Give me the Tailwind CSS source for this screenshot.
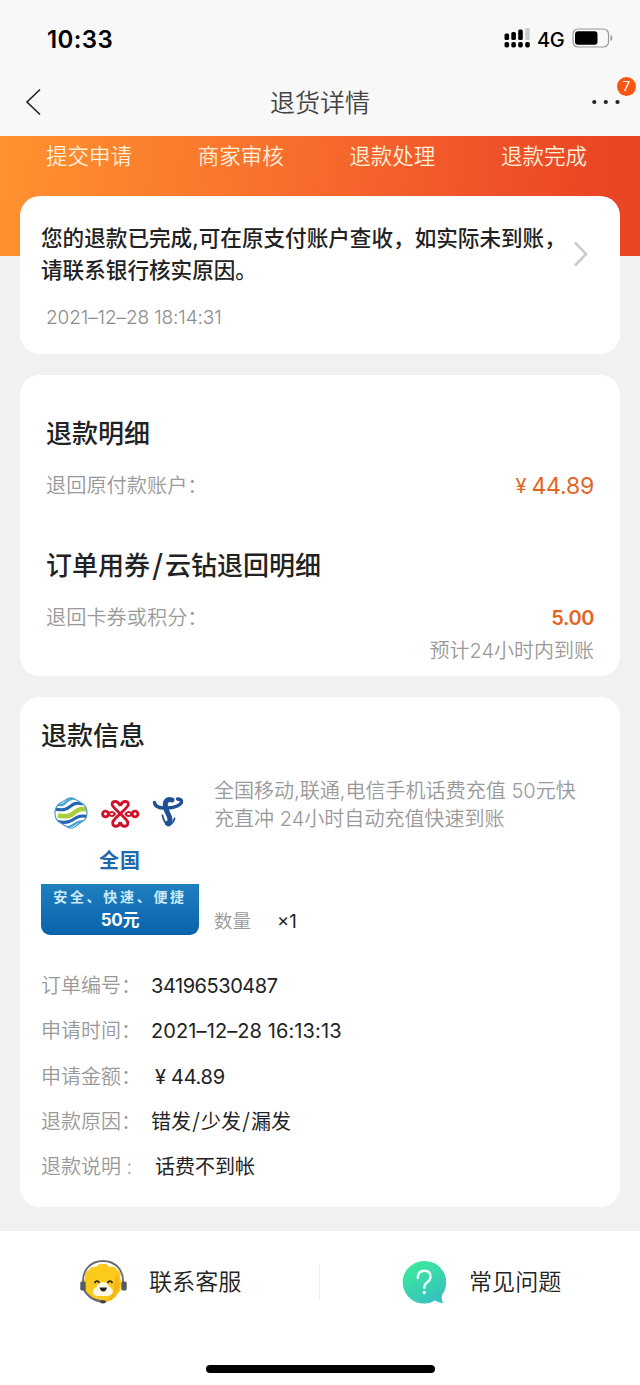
<!DOCTYPE html>
<html lang="zh-CN">
<head>
<meta charset="utf-8">
<meta name="viewport" content="width=device-width, initial-scale=1">
<title>退货详情</title>
<script src="https://cdn.jsdelivr.net/npm/@tailwindcss/browser@4"></script>
</head>
<body class="w-[640px] h-[1385px] overflow-hidden bg-[#f1f1f1] font-['Inter','Noto_Sans_CJK_SC',sans-serif] text-[#222] flex flex-col whitespace-nowrap">

<header class="h-[136px] shrink-0 bg-[#f8f8f8] flex flex-col">
  <div class="h-[76px] pl-[47px] pr-[26px] flex items-center justify-between">
    <span class="mt-[3px] text-[24px] leading-[30px] font-semibold text-black tracking-[0.4px]">10:33</span>
    <div class="flex items-center">
      <svg class="w-[27px] h-[21px]" viewBox="0 0 27 21">
        <g fill="#000"><rect x="0.5" y="5.500" width="4.600" height="6.500" rx="1.500"/><rect x="7.300" y="4" width="4.600" height="8" rx="1.500"/><rect x="14.200" y="1.500" width="4.600" height="10.500" rx="1.500"/><rect x="0.5" y="14" width="4.600" height="5.500" rx="1.800"/><rect x="7.300" y="14" width="4.600" height="5.500" rx="1.800"/><rect x="14.200" y="14" width="4.600" height="5.500" rx="1.800"/><rect x="21.200" y="14" width="4.600" height="5.500" rx="1.800"/></g>
        <rect x="21.200" y="0" width="4.600" height="12" rx="1.500" fill="#ccc"/>
      </svg>
      <span class="ml-[6px] mt-[3px] w-[28px] text-[20px] leading-[24px] font-medium text-black tracking-[-0.3px]">4G</span>
      <svg class="ml-[7px] w-[42px] h-[20px]" viewBox="0 0 42 20">
        <rect x="1" y="1" width="35.500" height="18" rx="5" fill="none" stroke="#999" stroke-width="1.200"/>
        <rect x="3" y="3.200" width="22.500" height="13.600" rx="3" fill="#000"/>
        <path d="M38.500 7v6c2.500-1 2.500-5 0-6z" fill="#999"/>
      </svg>
    </div>
  </div>
  <div class="h-[52px] px-[18px] grid grid-cols-[1fr_auto_1fr] items-center">
    <svg class="ml-[6px] w-[18px] h-[28px]" viewBox="0 0 18 28" fill="none" stroke="#222" stroke-width="1.600"><path d="M16 1.500 3 14l13 12.500"/></svg>
    <h1 class="mt-[2px] text-[25px] leading-[36px] font-[350] text-[#444]">退货详情</h1>
    <div class="justify-self-end relative w-[30px] h-[28px]">
      <svg class="w-[30px] h-[28px]" viewBox="0 0 30 28" fill="#222"><circle cx="2.300" cy="14" r="2.100"/><circle cx="13.800" cy="14" r="2.100"/><circle cx="25.500" cy="14" r="2.100"/></svg>
      <span class="absolute left-[25px] top-[-11px] w-[19px] h-[19px] rounded-full bg-[#f95611] text-white text-[13px] leading-[19px] text-center">7</span>
    </div>
  </div>
</header>

<main class="flex-1 px-[20px] flex flex-col bg-no-repeat bg-[length:100%_120px] bg-[linear-gradient(97deg,#ff922f_0%,#f9722c_40%,#f1572a_70%,#ea4524_94%)]">
  <div class="h-[60px] pt-[5px] pl-[26px] pr-[33px] flex justify-between text-[21.500px] leading-[30px] text-[#fff0dc] font-[350]">
    <span>提交申请</span><span>商家审核</span><span>退款处理</span><span>退款完成</span>
  </div>

  <section class="h-[158px] shrink-0 rounded-[20px] bg-white pl-[21px] pr-[31px] pt-[26px] flex justify-between">
    <div class="flex flex-col">
      <p class="text-[21.600px] leading-[32px] font-medium">您的退款已完成,可在原支付账户查收，如实际未到账，<br>请联系银行核实原因。</p>
      <time class="mt-[19px] ml-[5px] text-[19px] leading-[26px] font-light text-[#8c8c8c] tracking-[-0.1px]">2021–12–28 18:14:31</time>
    </div>
    <svg class="mt-[18px] -ml-[20px] w-[16px] h-[28px] shrink-0" viewBox="0 0 16 28" fill="none" stroke="#ccc" stroke-width="2.600"><path d="M2 2.500l11 11.500L2 25.500"/></svg>
  </section>

  <section class="mt-[21px] h-[301px] shrink-0 rounded-[20px] bg-white px-[26px] pt-[41px]">
    <h2 class="text-[26px] leading-[36px] font-medium">退款明细</h2>
    <div class="mt-[18px] h-[32px] flex justify-between items-center leading-[32px]">
      <span class="text-[20.200px] font-[350] text-[#999]">退回原付款账户：</span>
      <span class="text-[#e4651f] flex items-center"><span class="text-[20px] w-[16px]">¥</span><span class="text-[23px] tracking-[-0.2px]">44.89</span></span>
    </div>
    <h2 class="mt-[46px] h-[36px] text-[26px] leading-[36px] font-medium flex"><span>订单用券</span><span class="w-[15px] text-center text-[31px] font-normal">/</span><span>云钻退回明细</span></h2>
    <div class="mt-[18px] h-[32px] flex justify-between items-center leading-[32px]">
      <span class="text-[20.200px] font-[350] text-[#999]">退回卡券或积分：</span>
      <span class="text-[#e4651f] text-[20px] font-semibold tracking-[-0.4px]">5.00</span>
    </div>
    <p class="mt-[1px] text-right text-[20px] leading-[32px] font-[350] text-[#999]">预计24小时内到账</p>
  </section>

  <section class="mt-[21px] h-[510px] shrink-0 rounded-[20px] bg-white px-[21px] pt-[21px]">
    <h2 class="text-[26px] leading-[36px] font-medium">退款信息</h2>
    <div class="mt-[23px] flex gap-[16px] h-[158px]">
      <div class="w-[158px] rounded-[9px] overflow-hidden flex flex-col items-center">
        <svg class="w-[158px] h-[60px] shrink-0" viewBox="0 0 158 60" fill="none">
          <clipPath id="mobile"><path d="M27 21.500Q30 20 33 21.500L42 27Q46 30 46 36T42 44L33 50.500Q30 52 27 50.500L18 45Q14 42 14 36T18 27Z"/></clipPath>
          <g clip-path="url(#mobile)">
            <path d="M14 27.500c14 3 9-7 20-6" stroke="#4aa5cf" stroke-width="2.400"/>
            <path d="M14 32c18 4 13-9 28-5" stroke="#2466b0" stroke-width="3.200"/>
            <path d="M17 38.500c19 4 14-9 29-6" stroke="#a8cf38" stroke-width="4.600"/>
            <path d="M16 44.500c19 4 15-8 30-5" stroke="#2466b0" stroke-width="3.200"/>
            <path d="M20 49.500c15 3 12-7 24-5" stroke="#4aa5cf" stroke-width="2.400"/>
          </g>
          <path d="M27 21.500Q30 20 33 21.500L42 27Q46 30 46 36T42 44L33 50.500Q30 52 27 50.500L18 45Q14 42 14 36T18 27Z" stroke="#4a9cc4" stroke-width="1.200"/>
          <g stroke="#cf1129" stroke-width="2.900">
            <path d="M79.200 29C77 22.500 69.500 23.500 71.500 28.500 73 32 84.500 40.500 86.500 44.500 88.500 50 81 51.500 79.200 45"/>
            <path d="M79.200 29C81.400 22.500 89 23.500 87 28.500 85.500 32 74 40.500 72 44.500 70 50 77.400 51.500 79.200 45"/>
            <circle cx="64.500" cy="37" r="2.900"/><circle cx="94" cy="37" r="2.900"/>
            <path d="M67 37q4.500-4 7 0-2.500 4-7 0M91.500 37q-4.500-4-7 0 2.500 4 7 0" stroke-width="2.200"/>
          </g>
          <g stroke="#1e5096" stroke-linecap="round">
            <path d="M113.500 25.500C114 30 120 31.500 127 31 134 30.500 140 28 140.500 25 141 23 139 22 136.500 22" stroke-width="3.400"/>
            <path d="M131 23C126 21 123.500 25 124.500 30 125.500 36 129 38 129 43 129 46 128 47.500 126.500 46.500" stroke-width="5"/>
            <path d="M121.500 38.500C122.500 43 125 47.500 128 47.500 131 47.500 133 44 133.500 41.500" stroke-width="1.800"/>
          </g>
        </svg>
        <span class="text-[20px] leading-[48px] h-[47px] tracking-[1px] font-bold text-[#1f68aa]">全国</span>
        <div class="w-full flex-1 bg-gradient-to-b from-[#1e7fbe] to-[#0a62ad] text-white text-center font-bold">
          <div class="text-[14px] leading-[26px] h-[24px] tracking-[2.700px] text-[#cdeaf8]">安全、快速、便捷</div>
          <div class="text-[17px] leading-[24px] tracking-[-0.3px]">50元</div>
        </div>
      </div>
      <div class="flex-1 flex flex-col justify-between text-[20.050px] font-[350] text-[#999]">
        <p class="leading-[28px] -ml-[1px]">全国移动,联通,电信手机话费充值 50元快<br>充直冲 24小时自动充值快速到账</p>
        <p class="-ml-[1px] leading-[28px] flex gap-[26px] text-[18.500px]"><span>数量</span><span class="text-[#222] font-normal">×1</span></p>
      </div>
    </div>
    <dl class="mt-[29px] grid grid-cols-[110px_1fr] auto-rows-[45.300px] items-center text-[20px] leading-[45px] [&>dt]:font-[350] [&>dt]:text-[#999] [&>dd]:h-[45px]">
      <dt>订单编号：</dt><dd class="tracking-[-0.45px]">34196530487</dd>
      <dt>申请时间：</dt><dd class="tracking-[0.1px]">2021–12–28 16:13:13</dd>
      <dt>申请金额：</dt><dd class="pl-[4px] tracking-[-0.3px]">¥ 44.89</dd>
      <dt>退款原因：</dt><dd class="flex"><span>错发</span><span class="w-[10px] text-center text-[23px] font-light">/</span><span>少发</span><span class="w-[10px] text-center text-[23px] font-light">/</span><span>漏发</span></dd>
      <dt>退款说明&nbsp;:</dt><dd class="pl-[4px]">话费不到帐</dd>
    </dl>
  </section>
</main>

<footer class="h-[154px] shrink-0 bg-white flex flex-col items-center">
  <div class="h-[102px] w-full grid grid-cols-[319px_1px_320px] items-center text-[23.100px]">
    <div class="flex items-center pl-[79px] gap-[21px]">
      <svg class="w-[49px] h-[46px]" viewBox="0 0 49 46">
        <path d="M24 5q4-1 6 3 6-2 8 3 5 2 3 8 3 4 1 8 0 6-4 8-1 5-6 5-3 4-8 3-5 2-8-3-6 0-7-5-4-3-3-8-3-4 0-8-1-6 4-8 2-4 7-3 3-4 7-3z" fill="#fcc91d"/>
        <path d="M37 15q5 7 3 16l-7 10-8 2 9-8z" fill="#f5b61a"/>
        <path d="M24 23c5 0 5 4 8 6 4 3 1 8-4 8h-9c-5 0-7-5-3-8 3-2 3-6 8-6z" fill="#fff9e8"/>
        <path d="M15.500 24q2.500-4 5 0M28.500 24q2.500-4 5 0" fill="none" stroke="#222" stroke-width="1.700"/>
        <path d="M20.500 28.500h7.500q-1 4-3.700 4t-3.800-4z" fill="#222"/>
        <path d="M4 24C3 11 12 2 24 2s21 9 20 22M4 29c4 8 10 13 20 13.500" fill="none" stroke="#666a73" stroke-width="1.900"/>
        <rect x="1.300" y="22.500" width="5.400" height="9" rx="1.500" fill="#555a66"/><rect x="42.300" y="22.500" width="5.400" height="9" rx="1.500" fill="#555a66"/>
        <ellipse cx="24" cy="42.700" rx="3" ry="1.700" fill="#444"/>
      </svg>
      <span class="mt-[1px] font-[350]">联系客服</span>
    </div>
    <div class="h-[36px] bg-[#eee]"></div>
    <div class="flex items-center pl-[81px] gap-[23px]">
      <svg class="w-[45px] h-[45px]" viewBox="0 0 45 45">
        <defs><linearGradient id="help" x1="0.200" y1="0" x2="0.800" y2="1"><stop offset="0" stop-color="#3ceb9b"/><stop offset="1" stop-color="#36bfc0"/></linearGradient></defs>
        <path d="M22.500 1a21.300 21.300 0 1 0 11.500 39.500q4 2.500 8.500 2.500-2.500-3-1.500-8A21.300 21.300 0 0 0 22.500 1z" fill="url(#help)"/>
        <path d="M16.800 18q0-7.200 6.500-7.200 6.200 0 6.200 6 0 3.500-3.200 5.500-3 2-3 5.500" fill="none" stroke="#eefff8" stroke-width="2.400" stroke-linecap="round"/>
        <circle cx="23.300" cy="32.500" r="1.700" fill="#eefff8"/>
      </svg>
      <span class="mt-[1px] font-[350]">常见问题</span>
    </div>
  </div>
  <div class="mt-[32px] w-[229px] h-[8px] rounded-full bg-black"></div>
</footer>
</body>
</html>
